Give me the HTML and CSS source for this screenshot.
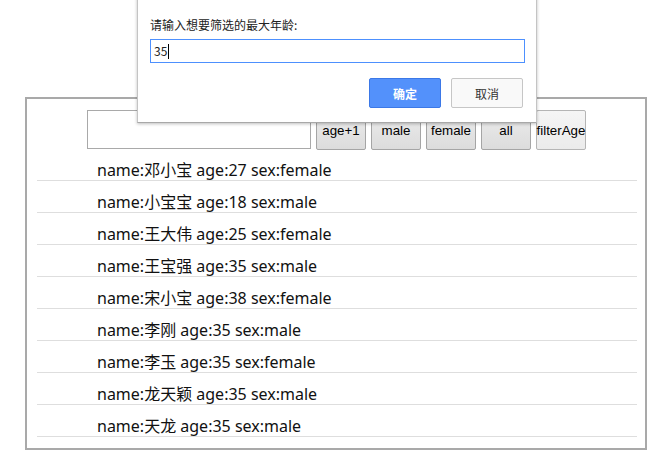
FILE: index.html
```html
<!DOCTYPE html>
<html>
<head>
<meta charset="utf-8">
<link rel="stylesheet" href="styles.css">
</head>
<body>
<div class="box">
  <div class="controls">
    <input class="search" type="text">
    <button class="btn">age+1</button>
    <button class="btn">male</button>
    <button class="btn">female</button>
    <button class="btn">all</button>
    <button class="btn btn-hover">filterAge</button>
  </div>
  <ul class="list">
    <li>name:邓小宝 age:27 sex:female</li>
    <li>name:小宝宝 age:18 sex:male</li>
    <li>name:王大伟 age:25 sex:female</li>
    <li>name:王宝强 age:35 sex:male</li>
    <li>name:宋小宝 age:38 sex:female</li>
    <li>name:李刚 age:35 sex:male</li>
    <li>name:李玉 age:35 sex:female</li>
    <li>name:龙天颖 age:35 sex:male</li>
    <li>name:天龙 age:35 sex:male</li>
  </ul>
</div>

<div class="dialog">
  <div class="dialog-msg">请输入想要筛选的最大年龄:</div>
  <div class="dialog-input">35<span class="caret"></span></div>
  <div class="dialog-actions">
    <button class="dbtn dbtn-ok">确定</button>
    <button class="dbtn dbtn-cancel">取消</button>
  </div>
</div>
</body>
</html>
```

FILE: styles.css
```css
html, body {
  margin: 0;
  padding: 0;
  background: #fff;
}
body {
  width: 655px;
  height: 471px;
  overflow: hidden;
  position: relative;
  font-family: "Noto Sans", "Noto Sans CJK SC", sans-serif;
}
.box {
  margin: 97px 0 0 25px;
  width: 618px;
  border: 2px solid #a9a9a9;
  padding: 11px 0 11px 0;
}
.controls {
  display: flex;
  justify-content: center;
  gap: 4.4px;
  height: 39px;
  padding-left: 1px;
}
.search {
  box-sizing: border-box;
  width: 224px;
  height: 39px;
  margin: 0 0.6px 0 0;
  border: 1px solid #a9a9a9;
  padding: 0;
  background: #fff;
}
.btn {
  box-sizing: border-box;
  width: 50.6px;
  height: 40px;
  padding: 0;
  border: 1px solid #a5a5a5;
  border-radius: 2px;
  background: linear-gradient(#ececec, #dcdcdc);
  font-family: "Liberation Sans", Arial, sans-serif;
  font-size: 13.33px;
  color: #000;
  white-space: nowrap;
  overflow: visible;
  display: flex;
  justify-content: center;
  align-items: center;
}
.btn-hover {
  background: linear-gradient(#f5f5f5, #ebebeb);
  border-color: #b5b5b5;
}
.list {
  list-style: none;
  margin: 0 auto 0 10px;
  padding: 0;
  width: 600px;
}
.list li {
  height: 20px;
  line-height: 20px;
  padding: 11px 0 0 60px;
  border-bottom: 1px solid #dedede;
  font-size: 16px;
  color: #111;
}
.dialog {
  position: absolute;
  left: 137px;
  top: -10px;
  width: 398px;
  height: 131px;
  background: #fff;
  border: 1px solid #c4c4c4;
  border-bottom-color: #a8a8a8;
  box-shadow: 0 1px 3px rgba(0,0,0,0.25);
  font-family: "Noto Sans CJK SC", "Noto Sans", sans-serif;
  font-size: 12px;
  color: #222;
}
.dialog-msg {
  margin: 26px 0 0 12px;
  height: 16px;
  line-height: 16px;
}
.dialog-input {
  box-sizing: border-box;
  margin: 6px 0 0 12px;
  width: 375px;
  height: 24px;
  border: 1px solid #4d90fe;
  padding: 0 0 0 3px;
  line-height: 22px;
  color: #222;
  display: flex;
  align-items: center;
}
.caret {
  display: inline-block;
  width: 1px;
  height: 15px;
  background: #000;
  margin-left: 1px;
}
.dialog-actions {
  display: flex;
  justify-content: flex-end;
  gap: 10px;
  margin: 15px 13px 0 0;
}
.dbtn {
  box-sizing: border-box;
  width: 72px;
  height: 30px;
  border-radius: 2px;
  font-family: "Noto Sans CJK SC", sans-serif;
  font-size: 12px;
  padding: 0;
}
.dbtn-ok {
  background: #5391fb;
  border: 1px solid #3b78e7;
  color: #fff;
  font-weight: bold;
}
.dbtn-cancel {
  background: #f9f9f9;
  border: 1px solid #c6c6c6;
  color: #333;
}
```
